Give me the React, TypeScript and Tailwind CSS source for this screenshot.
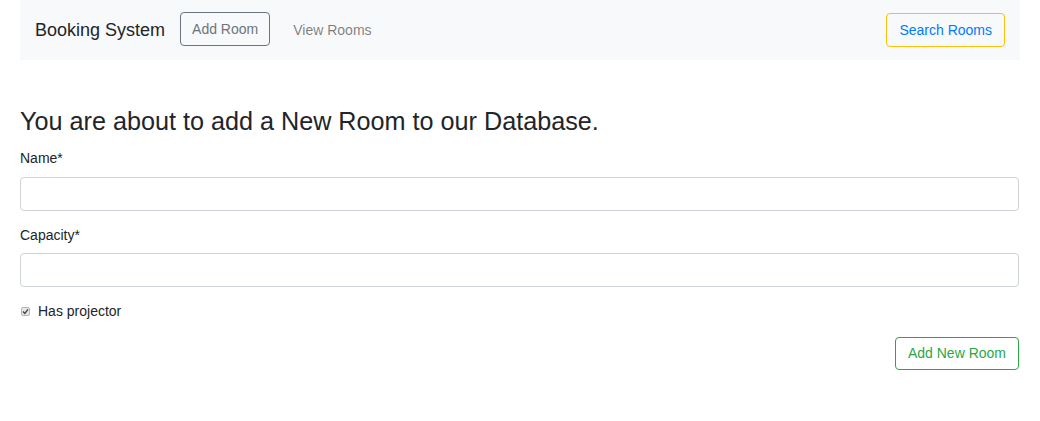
import React from "react";

export default function App() {
  return (
    <div
      className="w-[1040px] h-[421px] bg-white px-5 text-[14px] text-[#212529]"
      style={{ fontFamily: '"Liberation Sans", Arial, sans-serif' }}
    >
      <nav className="h-[60px] bg-[#f8f9fa] flex items-center pl-[15px] pr-[15px]">
        <span className="text-[18px] leading-[26px] text-[#212529] mr-[15px] -mt-[1px]">Booking System</span>
        <button className="h-[34px] px-[11px] border border-[#6c757d] rounded-[4px] text-[#6c757d] text-[14px] leading-[21px] -mt-[2px]">
          Add Room
        </button>
        <span className="ml-[23px] text-[14px] text-[rgba(0,0,0,0.5)] leading-[21px]">View Rooms</span>
        <div className="flex-1" />
        <button className="h-[34px] px-[12px] border border-[#ffc107] rounded-[4px] text-[#007bff] text-[14px] leading-[21px]">
          Search Rooms
        </button>
      </nav>

      <h3 className="mt-[47px] text-[25.2px] leading-[29px] font-normal text-[#212529]">
        You are about to add a New Room to our Database.
      </h3>

      <form className="mt-[12px]">
        <div className="mb-[14px]">
          <label className="block leading-[21px] mb-[8px]">Name*</label>
          <input className="block w-[999px] h-[34px] border border-[#ced4da] rounded-[4px] bg-white px-3 outline-none" />
        </div>
        <div className="mb-[14px]">
          <label className="block leading-[21px] mb-[7px]">Capacity*</label>
          <input className="block w-[999px] h-[34px] border border-[#ced4da] rounded-[4px] bg-white px-3 outline-none" />
        </div>
        <div className="flex items-center h-[21px] mb-[15px]">
          <span className="ml-[1px] w-[9px] h-[9px] rounded-[2px] border border-[#b5b5b5] bg-[#e6e6e6] flex items-center justify-center">
            <svg width="7" height="7" viewBox="0 0 7 7">
              <path d="M1 3.6 L2.8 5.4 L6 1.4" stroke="#444" strokeWidth="1.4" fill="none" />
            </svg>
          </span>
          <span className="ml-[8px] leading-[21px]">Has projector</span>
        </div>
        <div className="flex justify-end pr-[1px]">
          <button
            type="button"
            className="h-[33px] px-[12px] border border-[#28a745] rounded-[4px] text-[#28a745] text-[14px] leading-[21px]"
          >
            Add New Room
          </button>
        </div>
      </form>
    </div>
  );
}
